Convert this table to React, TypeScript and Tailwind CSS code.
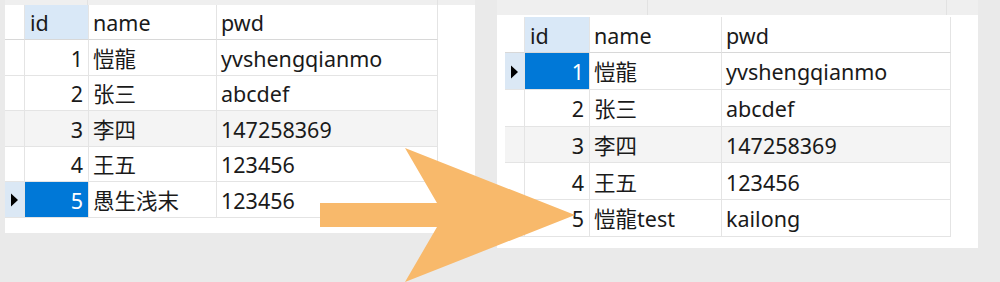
import React from "react";

type Row = { id: number; name: string; pwd: string };

const before: Row[] = [
  { id: 1, name: "愷龍", pwd: "yvshengqianmo" },
  { id: 2, name: "张三", pwd: "abcdef" },
  { id: 3, name: "李四", pwd: "147258369" },
  { id: 4, name: "王五", pwd: "123456" },
  { id: 5, name: "愚生浅末", pwd: "123456" },
];

const after: Row[] = [
  { id: 1, name: "愷龍", pwd: "yvshengqianmo" },
  { id: 2, name: "张三", pwd: "abcdef" },
  { id: 3, name: "李四", pwd: "147258369" },
  { id: 4, name: "王五", pwd: "123456" },
  { id: 5, name: "愷龍test", pwd: "kailong" },
];

type Cols = { ind: string; id: string; name: string; pwd: string };

function Grid({
  rows,
  selected,
  cols,
  headH,
  rowH,
}: {
  rows: Row[];
  selected: number;
  cols: Cols;
  headH: string;
  rowH: string;
}) {
  const cell = "flex items-center pt-[2px] border-r border-b border-[#e4e4e4] leading-none";
  return (
    <div className="flex flex-col text-[21.5px] text-[#1a1a1a]">
      <div className={`flex ${headH}`}>
        <div className={`${cell} ${cols.ind} bg-white border-b-[#d8d8d8]`} />
        <div className={`${cell} ${cols.id} bg-[#d9e8f7] border-b-[#d8d8d8] pl-[5px]`}>id</div>
        <div className={`${cell} ${cols.name} bg-white border-b-[#d8d8d8] pl-[4px]`}>name</div>
        <div className={`${cell} ${cols.pwd} bg-white border-b-[#d8d8d8] pl-[4px]`}>pwd</div>
      </div>
      {rows.map((r) => {
        const sel = r.id === selected;
        const tint = r.id === 3 ? "bg-[#f4f4f4]" : "bg-white";
        return (
          <div key={r.id} className={`flex ${rowH}`}>
            <div className={`${cell} ${cols.ind} justify-center ${sel ? "bg-[#dbe8f5]" : tint}`}>
              {sel ? (
                <svg width="9" height="14" viewBox="0 0 9 14">
                  <path d="M1 0.5 L8 7 L1 13.5 Z" fill="#000" />
                </svg>
              ) : null}
            </div>
            <div
              className={`${cell} ${cols.id} justify-end pr-[5px] ${
                sel ? "bg-[#0078d7] text-white" : tint
              }`}
            >
              {r.id}
            </div>
            <div className={`${cell} ${cols.name} ${tint} pl-[4px]`}>{r.name}</div>
            <div className={`${cell} ${cols.pwd} ${tint} pl-[4px]`}>{r.pwd}</div>
          </div>
        );
      })}
    </div>
  );
}

export default function App() {
  return (
    <div
      className="relative flex h-[282px] w-[1000px] overflow-hidden bg-[#eaeaea]"
      style={{ fontFamily: '"Noto Sans", "Noto Sans CJK SC", sans-serif' }}
    >
      {/* before */}
      <div className="ml-[5px] flex h-[233px] w-[470px] flex-col bg-white">
        <div className="flex h-[5px] bg-[#efefef]">
          <div className="w-[83px] border-r border-[#e2e2e2]" />
          <div className="w-[350px] border-r border-[#e2e2e2]" />
        </div>
        <Grid
          rows={before}
          selected={5}
          headH="h-[35px]"
          rowH="h-[35.5px]"
          cols={{ ind: "w-[20px]", id: "w-[64px]", name: "w-[128px]", pwd: "w-[221px]" }}
        />
      </div>

      {/* after */}
      <div className="ml-[22px] flex h-[248px] w-[481px] flex-col bg-white">
        <div className="flex h-[15px] bg-[#efefef]">
          <div className="w-[151px] border-r border-[#e2e2e2]" />
          <div className="w-[299px] border-r border-[#e2e2e2]" />
        </div>
        <div className="pl-[8px] pt-[2px]">
          <Grid
            rows={after}
            selected={1}
            headH="h-[36px]"
            rowH="h-[36.8px]"
            cols={{ ind: "w-[20px]", id: "w-[65px]", name: "w-[132px]", pwd: "w-[229px]" }}
          />
        </div>
      </div>

      {/* arrow over both tables */}
      <svg className="pointer-events-none absolute left-0 top-0" width="1000" height="282" viewBox="0 0 1000 282">
        <polygon points="320,203 437,203 405,148 575,215 405,282 437,227 320,227" fill="#f8b96b" />
      </svg>
    </div>
  );
}
